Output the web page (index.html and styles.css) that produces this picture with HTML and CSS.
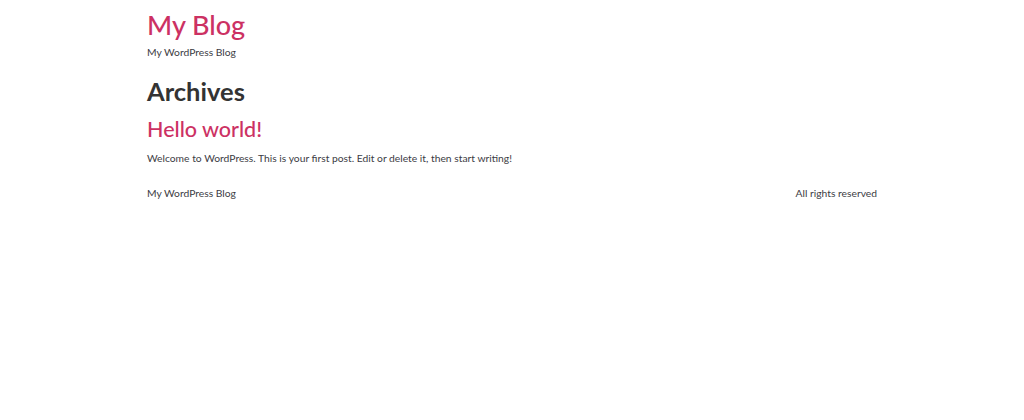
FILE: index.html
```html
<!DOCTYPE html>
<html lang="en">

<head>
    <meta charset="UTF-8">
    <meta name="viewport" content="width=device-width, initial-scale=1.0">
    <title>Archives - My Blog</title>
    <link rel="stylesheet" href="styles.css">
</head>

<body>
    <div class="container">
        <header class="site-header">
            <h1 class="site-title"><a href="#">My Blog</a></h1>
            <p class="site-description">My WordPress Blog</p>
        </header>

        <main class="site-main">
            <h1 class="page-title">Archives</h1>
            <article class="post">
                <h2 class="entry-title"><a href="#">Hello world!</a></h2>
                <p class="entry-content">Welcome to WordPress. This is your first post. Edit or delete it, then start writing!</p>
            </article>
        </main>

        <footer class="site-footer">
            <span>My WordPress Blog</span>
            <span>All rights reserved</span>
        </footer>
    </div>
</body>

</html>
```

FILE: styles.css
```css
body {
    margin: 0;
    font-family: Lato, "Open Sans", sans-serif;
    font-size: 10.3px;
    color: #3c3c44;
    background: #fff;
}

a {
    color: #cc3163;
    text-decoration: none;
}

.container {
    max-width: 730px;
    margin: 0 auto;
}

.site-header {
    padding-top: 8px;
}

.site-title {
    margin: 0;
    font-size: 27px;
    font-weight: 500;
    line-height: 34px;
}

.site-description {
    margin: 2px 0 0;
    line-height: 16px;
}

.page-title {
    margin: 15px 0 0;
    font-size: 25.5px;
    font-weight: 700;
    line-height: 32px;
    color: #333;
}

.entry-title {
    margin: 7px 0 0;
    font-size: 21.5px;
    font-weight: 500;
    line-height: 30px;
}

.entry-content {
    margin: 6px 0 0;
    line-height: 16px;
}

.site-footer {
    display: flex;
    justify-content: space-between;
    margin-top: 19px;
    line-height: 16px;
}
```
